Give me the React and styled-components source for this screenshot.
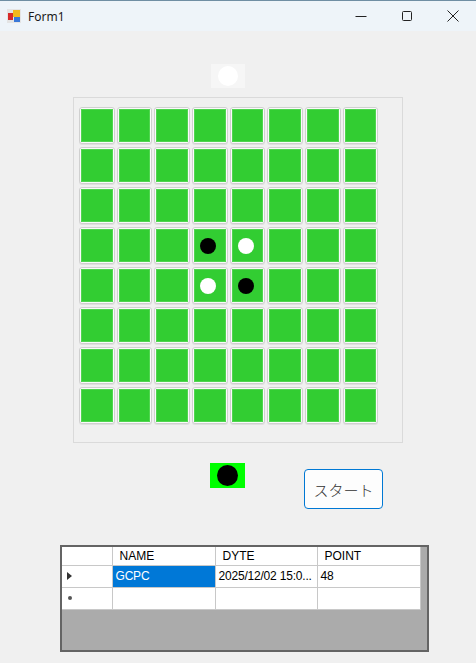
import styled, { createGlobalStyle } from "styled-components";

const GlobalStyle = createGlobalStyle`
  html, body {
    margin: 0;
    padding: 0;
    background: #f0f0f0;
  }
  body {
    font-family: "Noto Sans", "Noto Sans CJK JP", sans-serif;
  }
`;

// initial othello position: 1 = black, 2 = white
const board = Array.from({ length: 8 }, (_, r) =>
  Array.from({ length: 8 }, (_, c) => {
    if ((r === 3 && c === 3) || (r === 4 && c === 4)) return 1;
    if ((r === 3 && c === 4) || (r === 4 && c === 3)) return 2;
    return 0;
  })
);

const rows = [
  { marker: "current", name: "GCPC", date: "2025/12/02 15:0...", point: "48" },
  { marker: "new", name: "", date: "", point: "" },
];

export default function App() {
  return (
    <>
      <GlobalStyle />
      <Window>
        <TitleBar>
          <AppIcon viewBox="0 0 14 14">
            <rect x="0" y="0" width="14" height="14" fill="#e4e4e4" />
            <rect x="1" y="4" width="5" height="7" fill="#d62a2a" />
            <rect x="6" y="1" width="7" height="7" fill="#f2b81c" />
            <rect x="7" y="8" width="6" height="5" fill="#3a78d8" />
          </AppIcon>
          <Title>Form1</Title>
          <Controls>
            <CtrlButton>
              <svg width="12" height="12" viewBox="0 0 12 12">
                <path d="M0.5 6.5h11" stroke="#222" strokeWidth="1" />
              </svg>
            </CtrlButton>
            <CtrlButton>
              <svg width="12" height="12" viewBox="0 0 12 12">
                <rect x="1.5" y="1.5" width="9" height="9" rx="1" fill="none" stroke="#222" strokeWidth="1" />
              </svg>
            </CtrlButton>
            <CtrlButton>
              <svg width="12" height="12" viewBox="0 0 12 12">
                <path d="M0.5 0.5l11 11M11.5 0.5l-11 11" stroke="#222" strokeWidth="1" />
              </svg>
            </CtrlButton>
          </Controls>
        </TitleBar>

        <Body>
          <TurnBox $bg="#f6f6f6">
            <Stone $size={20} $color="#fff" />
          </TurnBox>

          <BoardPanel>
            <BoardGrid>
              {board.flat().map((v, i) => (
                <Cell key={i}>
                  <CellFace>
                    {v !== 0 && <Stone $size={16} $color={v === 1 ? "#000" : "#fff"} $shift />}
                  </CellFace>
                </Cell>
              ))}
            </BoardGrid>
          </BoardPanel>

          <BottomRow>
            <TurnBox $bg="#00ff00" $w={35} $h={25} $ml={210}>
              <Stone $size={21} $color="#000" />
            </TurnBox>
            <StartButton>スタート</StartButton>
          </BottomRow>

          <DataGrid>
            <GridTable>
              <thead>
                <tr>
                  <HeadCell $w={50} />
                  <HeadCell $w={103}>NAME</HeadCell>
                  <HeadCell $w={102}>DYTE</HeadCell>
                  <HeadCell $w={103}>POINT</HeadCell>
                </tr>
              </thead>
              <tbody>
                {rows.map((r, i) => (
                  <tr key={i}>
                    <RowHead>
                      {r.marker === "current" ? <Arrow /> : <Dot />}
                    </RowHead>
                    <DataCell $selected={r.marker === "current"}>{r.name}</DataCell>
                    <DataCell>{r.date}</DataCell>
                    <DataCell>{r.point}</DataCell>
                  </tr>
                ))}
              </tbody>
            </GridTable>
          </DataGrid>
        </Body>
      </Window>
    </>
  );
}

/****************** styled component ***************/

const Window = styled.div`
  width: 476px;
  height: 663px;
  background: #f0f0f0;
  overflow: hidden;
`;

const TitleBar = styled.div`
  height: 31px;
  display: flex;
  align-items: center;
  background: #eef4f9;
  border-top: 1px solid #6f8ea3;
  box-sizing: border-box;
  padding-left: 7px;
`;

const AppIcon = styled.svg`
  width: 14px;
  height: 14px;
  margin-right: 7px;
`;

const Title = styled.span`
  font-size: 12px;
  color: #1a1a1a;
  font-family: "Noto Sans", sans-serif;
`;

const Controls = styled.div`
  margin-left: auto;
  display: flex;
  height: 100%;
`;

const CtrlButton = styled.div`
  width: 46px;
  height: 100%;
  display: flex;
  align-items: center;
  justify-content: center;
`;

const Body = styled.div`
  display: flex;
  flex-direction: column;
  padding-top: 33px;
`;

const TurnBox = styled.div`
  width: ${(p) => p.$w || 34}px;
  height: ${(p) => p.$h || 24}px;
  margin-left: ${(p) => (p.$ml != null ? p.$ml : 211)}px;
  background: ${(p) => p.$bg};
  display: flex;
  align-items: center;
  justify-content: center;
  flex-shrink: 0;
`;

const Stone = styled.div`
  width: ${(p) => p.$size}px;
  height: ${(p) => p.$size}px;
  border-radius: 50%;
  background: ${(p) => p.$color};
  margin-right: ${(p) => (p.$shift ? 4 : 0)}px;
`;

const BoardPanel = styled.div`
  margin: 9px 0 0 73px;
  width: 330px;
  height: 346px;
  box-sizing: border-box;
  border: 1px solid #dadada;
  padding: 9px 0 0 5px;
`;

const BoardGrid = styled.div`
  display: grid;
  grid-template-columns: repeat(8, 35.6px);
  grid-auto-rows: 37.4px;
  column-gap: 2.1px;
  row-gap: 2.6px;
`;

const Cell = styled.div`
  box-sizing: border-box;
  border: 1px solid #d0d0d0;
  border-radius: 3px;
  background: #fbfbfb;
  padding: 1px;
  box-shadow: 0 1px 0 #e0e0e0;
`;

const CellFace = styled.div`
  width: 100%;
  height: 100%;
  box-sizing: border-box;
  background: #32cd32;
  border: 1px solid #4fd64f;
  display: flex;
  align-items: center;
  justify-content: center;
`;

const BottomRow = styled.div`
  display: flex;
  align-items: flex-start;
  margin-top: 20px;
`;

const StartButton = styled.button`
  margin: 6px 0 0 59px;
  width: 79px;
  height: 40px;
  box-sizing: border-box;
  border: 1px solid #0078d4;
  border-radius: 4px;
  background: #fdfdfd;
  font-family: "Noto Sans CJK JP", sans-serif;
  font-size: 15px;
  font-weight: 300;
  color: #333;
  padding: 0;
`;

const DataGrid = styled.div`
  margin: 36px 0 0 60px;
  width: 369px;
  height: 107px;
  box-sizing: border-box;
  border: 2px solid #646464;
  background: #ababab;
  overflow: hidden;
`;

const GridTable = styled.table`
  border-collapse: collapse;
  table-layout: fixed;
  font-family: "Liberation Sans", sans-serif;
  font-size: 12px;
  color: #000;
`;

const HeadCell = styled.th`
  width: ${(p) => p.$w}px;
  height: 18px;
  box-sizing: border-box;
  padding: 0 0 0 7px;
  background: #fff;
  border: 1px solid #c8c8c8;
  border-top: none;
  font-weight: normal;
  text-align: left;
  white-space: nowrap;
  overflow: hidden;

  &:first-child {
    border-left: none;
  }
`;

const RowHead = styled.td`
  height: 22px;
  box-sizing: border-box;
  padding: 0 0 0 5px;
  background: #fff;
  border: 1px solid #c8c8c8;
  border-left: none;
  vertical-align: middle;
`;

const DataCell = styled.td`
  height: 22px;
  box-sizing: border-box;
  padding: 0 0 0 3px;
  background: ${(p) => (p.$selected ? "#0078d7" : "#fff")};
  color: ${(p) => (p.$selected ? "#fff" : "#000")};
  border: 1px solid #c8c8c8;
  white-space: nowrap;
  overflow: hidden;
  letter-spacing: -0.2px;
`;

const Arrow = styled.div`
  width: 0;
  height: 0;
  border-top: 4px solid transparent;
  border-bottom: 4px solid transparent;
  border-left: 5px solid #333;
`;

const Dot = styled.div`
  width: 4px;
  height: 4px;
  border-radius: 50%;
  background: #555;
  margin-left: 1px;
`;
